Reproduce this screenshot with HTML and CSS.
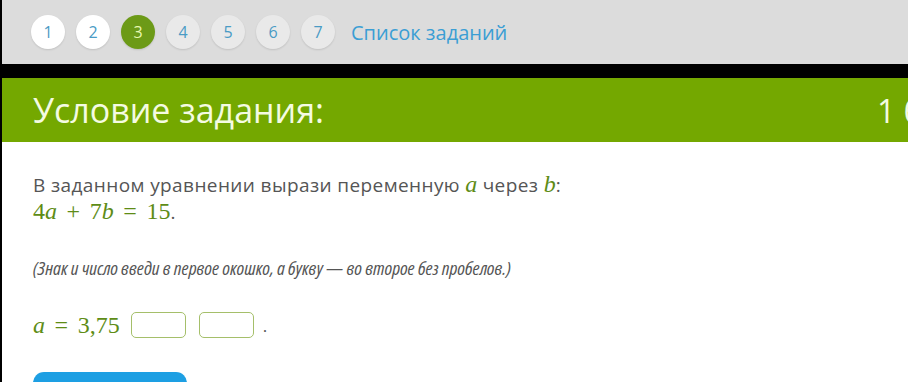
FILE: index.html
```html
<!DOCTYPE html>
<html lang="ru">
<head>
<meta charset="utf-8">
<title>Условие задания</title>
<link rel="stylesheet" href="styles.css">
</head>
<body>
<div class="page">
  <nav class="topnav">
    <span class="step done">1</span>
    <span class="step done">2</span>
    <span class="step current">3</span>
    <span class="step">4</span>
    <span class="step">5</span>
    <span class="step">6</span>
    <span class="step">7</span>
    <a class="list-link">Список заданий</a>
  </nav>
  <div class="band"></div>
  <header class="header">
    <h1 class="title">Условие задания:</h1>
    <span class="points">1 балл</span>
  </header>
  <main class="content">
    <p class="task">В заданном уравнении вырази переменную <span class="m"><i>a</i></span> через <span class="m"><i>b</i></span>:<br>
      <span class="m">4<i>a</i><span class="bin">+</span>7<i>b</i><span class="rel">=</span>15</span>.</p>
    <p class="hint">(Знак и число введи в первое окошко, а букву — во второе без пробелов.)</p>
    <div class="answer">
      <span class="m"><i>a</i><span class="rel">=</span>3,75</span>
      <span class="box first"></span>
      <span class="box"></span>
      <span class="dot">.</span>
    </div>
    <div class="btn"></div>
  </main>
</div>
</body>
</html>
```
FILE: styles.css
```css
html, body {
  margin: 0;
  padding: 0;
  background: #fff;
}
body {
  font-family: "Open Sans", "Noto Sans", sans-serif;
  overflow: hidden;
}
.page {
  border-left: 2px solid #000;
  height: 382px;
  overflow: hidden;
}
.topnav {
  height: 64px;
  background: #dcdcdc;
  display: flex;
  align-items: center;
  padding-left: 29px;
  gap: 11px;
  box-sizing: border-box;
}
.step {
  width: 34px;
  height: 34px;
  border-radius: 50%;
  background: #e9e9e9;
  color: #4a9bc5;
  font-size: 16px;
  display: flex;
  align-items: center;
  justify-content: center;
  box-shadow: 0 1px 2px rgba(0,0,0,0.12);
}
.step.done {
  background: #fff;
}
.step.current {
  background: #6c9a17;
  color: #e8f7b0;
}
.list-link {
  margin-left: 5px;
  color: #3b9ed4;
  font-size: 20px;
}
.band {
  height: 14px;
  background: #000;
}
.header {
  height: 64px;
  background: #74a800;
  display: flex;
  align-items: center;
  justify-content: space-between;
  padding-left: 31px;
  overflow: hidden;
}
.title {
  margin: 0;
  font-weight: 400;
  font-size: 34px;
  font-stretch: 97%;
  color: #f4fbe2;
}
.points {
  width: 31px;
  overflow: hidden;
  white-space: nowrap;
  font-size: 32px;
  color: #f4fbe2;
}
.content {
  padding: 29px 31px 0;
  color: #555;
  font-size: 19px;
}
.task {
  margin: 0;
  line-height: 26px;
  letter-spacing: 0.4px;
}
.m {
  font-family: "Liberation Serif", "DejaVu Serif", serif;
  color: #5e8c16;
  font-size: 24px;
  letter-spacing: 0;
}
.m i {
  font-style: italic;
}
.bin {
  margin: 0 0.4em;
}
.rel {
  margin: 0 0.4em;
}
.hint {
  margin: 30px 0 0;
  font-style: italic;
  line-height: 26px;
  font-size: 19px;
  font-stretch: 80%;
}
.answer {
  margin-top: 30px;
  display: flex;
  align-items: center;
  height: 28px;
}
.box {
  width: 53px;
  height: 24px;
  border: 1px solid #a5bf6a;
  border-radius: 5px;
  margin-left: 13px;
  background: #fff;
}
.box.first {
  margin-left: 11px;
}
.dot {
  margin-left: 9px;
  color: #555;
  font-size: 17px;
}
.btn {
  margin-top: 33px;
  width: 154px;
  height: 30px;
  border-radius: 11px;
  background: #1d9fe3;
}
```
